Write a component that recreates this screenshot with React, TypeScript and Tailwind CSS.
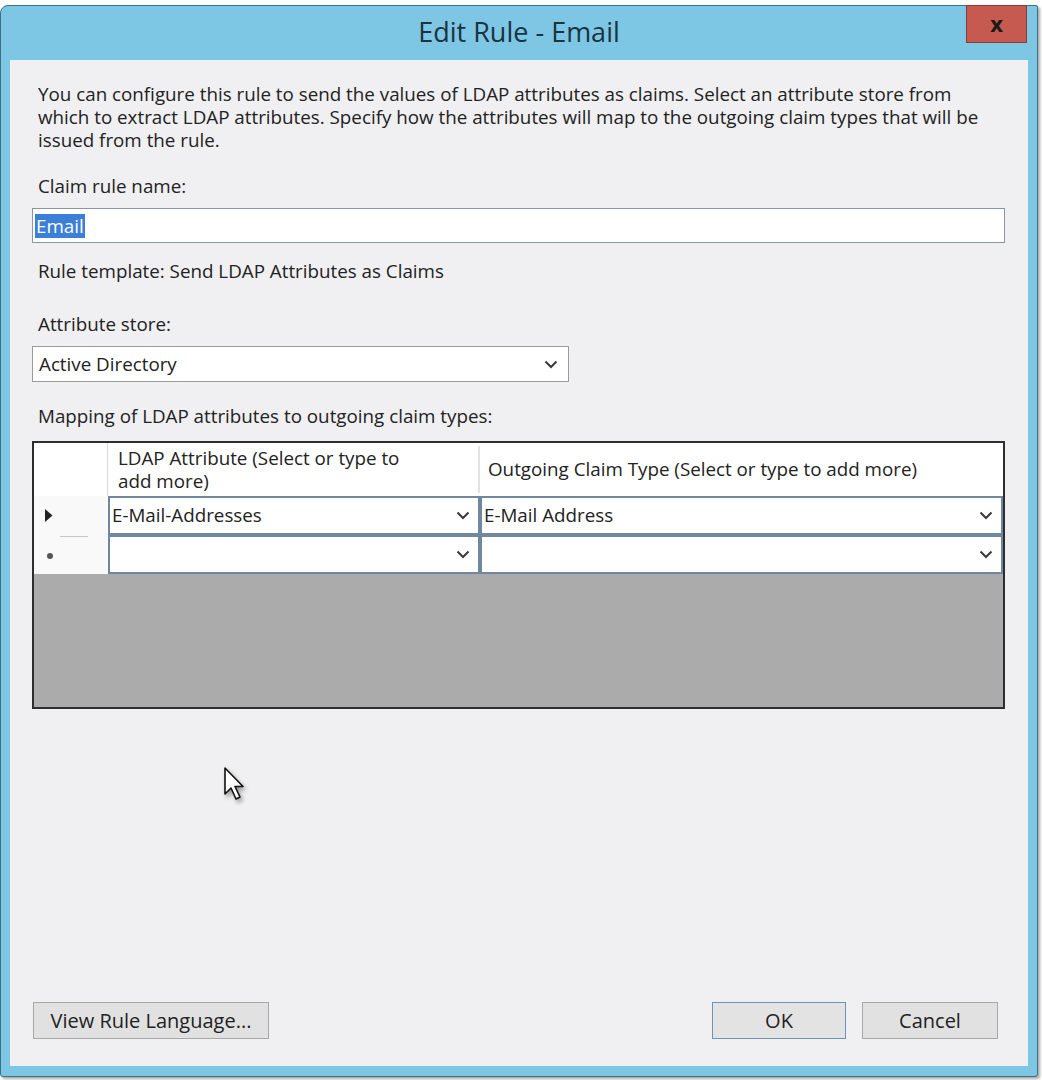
import React from 'react';

function Chevron() {
  return (
    <svg width="14" height="9" viewBox="0 0 14 9" className="shrink-0">
      <path d="M1.5 1.5 L7 7 L12.5 1.5" fill="none" stroke="#3a3a3a" strokeWidth="2" />
    </svg>
  );
}

function Cell({ value, width }: { value: string; width: string }) {
  return (
    <div className={`${width} h-full bg-white border-2 border-[#6f889f] flex items-center justify-between pl-[2px] pr-[8px]`}>
      <span className="truncate">{value}</span>
      <Chevron />
    </div>
  );
}

function Cursor() {
  return (
    <svg width="30" height="42" viewBox="0 0 30 42" className="absolute left-[222px] top-[766px] drop-shadow-[2px_3px_2px_rgba(0,0,0,0.35)]">
      <path d="M3 2 L3 28 L9 22 L14 33 L18 31 L13 20.5 L21 20.5 Z" fill="#ffffff" stroke="#111111" strokeWidth="1.6" strokeLinejoin="round" />
    </svg>
  );
}

export default function App() {
  return (
    <div className="relative w-[1042px] h-[1080px] bg-white font-['Open_Sans',sans-serif] text-[18.8px] text-[#222222] overflow-hidden">
      {/* window frame */}
      <div className="mt-[5px] w-[1038px] h-[1072px] flex flex-col bg-[#7dc6e4] border border-[#3d6f86] rounded-tl-[8px] rounded-tr-[2px] rounded-b-[3px] shadow-[2px_2px_3px_rgba(0,0,0,0.35)]">
        {/* title bar */}
        <div className="relative h-[54px] shrink-0 flex items-center justify-center">
          <span className="text-[27px] text-[#1c3342] -mt-[1px]">Edit Rule - Email</span>
          <div className="absolute right-[10px] top-[-1px] w-[61px] h-[38px] bg-[#c75a50] border border-[#8a3c36] flex items-center justify-center">
            <span className="text-[22px] font-bold leading-none text-[#1a1a1a] -mt-[2px]">x</span>
          </div>
        </div>

        {/* client area */}
        <div className="flex-1 mx-[9px] mb-[10px] bg-[#f0eff2] flex flex-col pl-[22px] pr-[23px] pt-[23px] pb-[27px]">
          <p className="pl-[6px] leading-[23px] whitespace-nowrap">
            You can configure this rule to send the values of LDAP attributes as claims. Select an attribute store from
            <br />
            which to extract LDAP attributes. Specify how the attributes will map to the outgoing claim types that will be
            <br />
            issued from the rule.
          </p>

          <div className="pl-[6px] mt-[23px] leading-[23px]">Claim rule name:</div>
          <div className="mt-[10px] h-[35px] bg-white border border-[#8a97a3] flex items-center pl-[2px]">
            <span className="bg-[#3b7fd9] text-white leading-[24px] px-[1px]">Email</span>
          </div>

          <div className="pl-[6px] mt-[17px] leading-[23px]">Rule template: Send LDAP Attributes as Claims</div>

          <div className="pl-[6px] mt-[30px] leading-[23px]">Attribute store:</div>
          <div className="mt-[10px] w-[537px] h-[36px] bg-white border border-[#9a9a9a] flex items-center justify-between pl-[6px] pr-[10px]">
            <span>Active Directory</span>
            <Chevron />
          </div>

          <div className="pl-[6px] mt-[23px] leading-[23px]">Mapping of LDAP attributes to outgoing claim types:</div>

          {/* data grid */}
          <div className="mt-[13px] h-[268px] border-2 border-[#2e2e2e] bg-[#ababab] flex flex-col">
            <div className="h-[53px] bg-white flex">
              <div className="w-[74px] border-r border-[#d8d8d8]" />
              <div className="w-[372px] flex flex-col justify-center pl-[10px] leading-[23px] border-r-2 border-[#e2e2e2] my-[3px]">
                <span>LDAP Attribute (Select or type to</span>
                <span>add more)</span>
              </div>
              <div className="flex-1 flex items-center pl-[8px]">Outgoing Claim Type (Select or type to add more)</div>
            </div>
            <div className="h-[39px] flex">
              <div className="w-[74px] bg-[#f9f9f9] flex items-center pl-[11px]">
                <svg width="8" height="13" viewBox="0 0 8 13">
                  <path d="M0 0 L7.5 6.5 L0 13 Z" fill="#222222" />
                </svg>
              </div>
              <Cell value="E-Mail-Addresses" width="w-[372px]" />
              <Cell value="E-Mail Address" width="flex-1" />
            </div>
            <div className="h-[39px] flex">
              <div className="w-[74px] bg-[#f9f9f9] flex flex-col">
                <div className="ml-[26px] w-[28px] h-[1px] bg-[#c8c8c8] mt-[1px]" />
                <div className="flex-1 flex items-center pl-[13px]">
                  <div className="w-[6px] h-[6px] rounded-full bg-[#555]" />
                </div>
              </div>
              <Cell value="" width="w-[372px]" />
              <Cell value="" width="flex-1" />
            </div>
          </div>

          <div className="flex-1" />

          {/* buttons */}
          <div className="flex items-center justify-between pl-[1px] pr-[7px]">
            <button className="w-[236px] h-[37px] bg-[#e1e1e1] border border-[#a8a8a8] text-[20px] text-[#222]">
              View Rule Language...
            </button>
            <div className="flex gap-[16px]">
              <button className="w-[134px] h-[37px] bg-[#e3e3e3] border border-[#6f92b8] text-[20px] text-[#222]">OK</button>
              <button className="w-[136px] h-[37px] bg-[#e1e1e1] border border-[#a8a8a8] text-[20px] text-[#222]">Cancel</button>
            </div>
          </div>
        </div>
      </div>
      <Cursor />
    </div>
  );
}
